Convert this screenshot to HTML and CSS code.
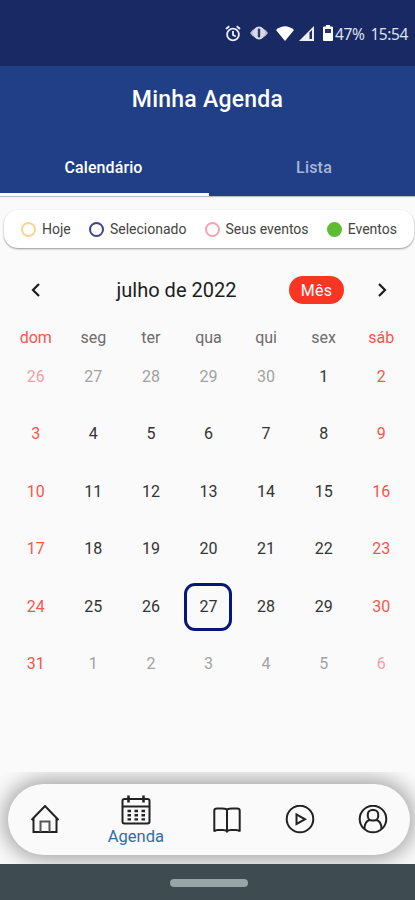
FILE: index.html
```html
<!DOCTYPE html>
<html lang="pt-BR">
<head>
  <meta charset="UTF-8">
  <meta name="viewport" content="width=device-width, initial-scale=1.0">
  <title>Minha Agenda</title>
  <link rel="stylesheet" href="styles.css">
</head>
<body>

  <div class="status-bar">
    <svg class="status-alarm" width="16" height="17" viewBox="0 0 16 17" fill="none" stroke="#eef1fa" stroke-width="1.8">
      <circle cx="8" cy="9.5" r="5.9"/>
      <path d="M8 6v4l2.700 1.600M1 4l3.300-2.700M15 4l-3.300-2.700"/>
    </svg>
    <svg class="status-vibrate" width="18" height="14" viewBox="0 0 18 14">
      <path d="M0 7L3 3.500h12L18 7l-3 3.500H3z" fill="#b9bfd3"/>
      <ellipse cx="9" cy="7" rx="6" ry="6.500" fill="#d8dbe7"/>
      <rect x="7.800" y="2.500" width="2.400" height="9" rx="1" fill="#2b3a70"/>
    </svg>
    <svg class="status-wifi" width="18" height="15" viewBox="0 0 18 15">
      <path d="M0 4Q9-3.500 18 4L9 15z" fill="#fff"/>
    </svg>
    <svg class="status-signal" width="15" height="15" viewBox="0 0 15 15">
      <path d="M0 15L15 0v15z" fill="#eceef6"/>
      <path d="M10.500 6.500l2.500-2.500v9h-2.500z" fill="#1f2d66"/>
    </svg>
    <svg class="status-battery" width="10" height="16" viewBox="0 0 10 16">
      <path d="M3 0h4v1.500h2q1 0 1 1V15q0 1-1 1H1q-1 0-1-1V2.500q0-1 1-1h2z" fill="#fff"/>
      <path d="M2 4h6v4H2z" fill="#27356c"/>
    </svg>
    <span class="battery-level">47%</span>
    <span class="clock">15:54</span>
  </div>

  <header class="header">
    <h1>Minha Agenda</h1>
    <div class="tabs">
      <a class="tab active">Calendário</a>
      <a class="tab">Lista</a>
    </div>
  </header>

  <main class="content">
    <div class="legend">
      <div class="legend-item"><span class="dot today"></span>Hoje</div>
      <div class="legend-item"><span class="dot selected"></span>Selecionado</div>
      <div class="legend-item"><span class="dot yours"></span>Seus eventos</div>
      <div class="legend-item"><span class="dot events"></span>Eventos</div>
    </div>

    <div class="month-bar">
      <svg class="arrow" width="10" height="14" viewBox="0 0 10 14"><path d="M8 1L2 7l6 6"/></svg>
      <span class="month-name">julho de 2022</span>
      <button class="month-button">Mês</button>
      <svg class="arrow" width="10" height="14" viewBox="0 0 10 14"><path d="M2 1l6 6-6 6"/></svg>
    </div>

    <div class="week-days">
      <span>dom</span><span>seg</span><span>ter</span><span>qua</span><span>qui</span><span>sex</span><span>sáb</span>
    </div>

    <div class="days">
      <span class="out">26</span><span class="out">27</span><span class="out">28</span><span class="out">29</span><span class="out">30</span><span>1</span><span>2</span>
      <span>3</span><span>4</span><span>5</span><span>6</span><span>7</span><span>8</span><span>9</span>
      <span>10</span><span>11</span><span>12</span><span>13</span><span>14</span><span>15</span><span>16</span>
      <span>17</span><span>18</span><span>19</span><span>20</span><span>21</span><span>22</span><span>23</span>
      <span>24</span><span>25</span><span>26</span><span class="current">27</span><span>28</span><span>29</span><span>30</span>
      <span>31</span><span class="out">1</span><span class="out">2</span><span class="out">3</span><span class="out">4</span><span class="out">5</span><span class="out">6</span>
    </div>
  </main>

  <div class="nav-area">
    <nav class="nav">
      <a class="nav-item">
        <svg width="30" height="30" viewBox="0 0 30 30">
          <path d="M1.500 15L15 1l13.500 14M3.500 13.500V27h23V13.500"/>
          <path class="door" d="M10.500 27V16.500h9V27"/>
        </svg>
      </a>
      <a class="nav-item active">
        <svg width="30" height="30" viewBox="0 0 30 30">
          <rect x="1.500" y="4" width="27" height="24.500" rx="2"/>
          <path d="M1.500 11.500h27"/>
          <path class="rings" d="M7.500 0.500v7M22.500 0.500v7"/>
          <path class="dates" d="M6.500 16h17.500M6.500 20.200h17.500M6.500 24.400h17.500"/>
        </svg>
        <span>Agenda</span>
      </a>
      <a class="nav-item">
        <svg width="28" height="26" viewBox="0 0 28 26">
          <path d="M14 2.500Q12 1.500 9 1.500H4Q1.300 1.500 1.300 3.500v21Q2 23 5 23h5q3 0 4 1.500Q15 23 18 23h5q3 0 3.700 1.500v-21q0-2-2.700-2H19Q16 1.500 14 2.500zM14 2.500v22"/>
        </svg>
      </a>
      <a class="nav-item">
        <svg width="30" height="30" viewBox="0 0 30 30">
          <circle cx="15" cy="14" r="13.300"/>
          <path d="M11.500 9.500v9.500l8.500-4.700z"/>
        </svg>
      </a>
      <a class="nav-item">
        <svg width="30" height="30" viewBox="0 0 30 30">
          <circle cx="15" cy="14" r="13.300"/>
          <rect x="9.800" y="5" width="10.400" height="10.500" rx="4.500"/>
          <path d="M6.500 24q0-8 5.500-9M23.500 24q0-8-5.500-9"/>
        </svg>
      </a>
    </nav>
  </div>

  <div class="system-bar"><div class="handle"></div></div>

</body>
</html>
```

FILE: styles.css
```css
* {
  box-sizing: border-box;
}

body {
  margin: 0;
  height: 900px;
  display: flex;
  flex-direction: column;
  font-family: Roboto, sans-serif;
  background-color: #fafafa;
  overflow: hidden;
}

.status-bar {
  height: 66px;
  flex: none;
  display: flex;
  align-items: center;
  justify-content: flex-end;
  padding: 0 7px 0 0;
  background-color: #192963;
  color: #dfe3ef;
  font-family: "Noto Sans", sans-serif;
  font-size: 15.5px;
  letter-spacing: -0.4px;
}

.status-alarm {
  margin-right: 9px;
}

.status-vibrate {
  margin-right: 8px;
}

.status-wifi {
  margin-right: 5px;
}

.status-signal {
  margin-right: 9px;
}

.status-battery {
  margin-right: 2px;
}

.battery-level,
.clock {
  padding-top: 2px;
}

.battery-level {
  margin-right: 6px;
}

.header {
  height: 130px;
  flex: none;
  display: flex;
  flex-direction: column;
  justify-content: space-between;
  background-color: #203f86;
  color: white;
  box-shadow: 0 1px 1px #b9bdc8;
}

h1 {
  margin: 20px 0 0;
  text-align: center;
  font-size: 23px;
  line-height: 28px;
  font-weight: 500;
  letter-spacing: 0.25px;
}

.tabs {
  display: grid;
  grid-template-columns: 209px 1fr;
}

.tab {
  height: 58px;
  padding: 20px 0 0 4px;
  text-align: center;
  font-size: 16px;
  line-height: 20px;
  font-weight: 500;
  letter-spacing: 0.2px;
  color: #a9b5d8;
  border-bottom: 3px solid transparent;
}

.tab.active {
  padding-left: 0;
  padding-right: 2px;
  letter-spacing: 0.1px;
  color: white;
  border-bottom-color: white;
}

.content {
  flex: 1;
}

.legend {
  height: 38px;
  margin: 14px 1px 0 4px;
  padding: 0 17px 0 17px;
  display: flex;
  align-items: center;
  justify-content: space-between;
  background-color: white;
  border-radius: 14px;
  box-shadow: 0 1px 2px rgba(0, 0, 0, 0.4);
  font-size: 14px;
  color: #444;
}

.legend-item {
  display: flex;
  align-items: center;
  gap: 6px;
}

.dot {
  width: 15px;
  height: 15px;
  border-radius: 50%;
  border: 2px solid;
}

.dot.today {
  border-color: #fcd293;
}

.dot.selected {
  border-color: #3c4690;
}

.dot.yours {
  border-color: #f5a3b0;
}

.dot.events {
  border-color: #5cbd2f;
  background-color: #5cbd2f;
}

.month-bar {
  height: 28px;
  margin-top: 28px;
  padding: 0 28px 0 31px;
  display: flex;
  align-items: center;
}

.arrow {
  fill: none;
  stroke: #1b1b1b;
  stroke-width: 2.2;
}

.month-name {
  flex: 1;
  padding-left: 23px;
  text-align: center;
  font-size: 20px;
  color: #1d1d1d;
}

.month-button {
  width: 55px;
  height: 28px;
  margin: 0 33px 0 0;
  padding: 0;
  border: none;
  border-radius: 14px;
  background-color: #fb3524;
  color: white;
  font-family: inherit;
  font-size: 16px;
  letter-spacing: 0.3px;
}

.week-days, .days {
  display: grid;
  grid-template-columns: repeat(7, 1fr);
  padding: 0 5px 0 7px;
  text-align: center;
}

.week-days {
  margin-top: 24px;
  font-size: 16px;
  line-height: 20px;
  color: #6c6c6c;
}

.days {
  margin-top: -0.5px;
  grid-auto-rows: 57.6px;
  font-size: 16px;
  line-height: 57.6px;
  color: #333;
}

.week-days span:nth-child(7n+1), .week-days span:nth-child(7n),
.days span:nth-child(7n+1), .days span:nth-child(7n) {
  color: #f6564b;
}

.days .out {
  color: #a2a2a2;
}

.days .out:nth-child(7n+1), .days .out:nth-child(7n) {
  color: #f5a0a5;
}

.days .current {
  width: 48px;
  height: 48px;
  place-self: center;
  border: 3px solid #061877;
  border-radius: 11px;
  line-height: 42px;
}

.nav-area {
  height: 92px;
  flex: none;
  padding: 12px 5px 0 8px;
  overflow: hidden;
}

.nav {
  height: 71px;
  display: flex;
  align-items: center;
  background-color: #fafafa;
  border-radius: 36px;
  box-shadow: 0 0 22px 3px rgba(0, 0, 0, 0.4);
}

.nav-item {
  flex: 1;
  display: flex;
  flex-direction: column;
  align-items: center;
}

.nav-item.active {
  flex: 1.5;
  padding-top: 3px;
  color: #2c6fae;
  font-size: 16.5px;
  line-height: 20px;
}

.nav-item.active span {
  padding-top: 2px;
}

.nav-item svg {
  fill: none;
  stroke: #222;
  stroke-width: 2;
}

.nav-item .door {
  stroke: #555;
}

.nav-item .rings {
  stroke-width: 2.6;
}

.nav-item .dates {
  stroke-width: 2.4;
  stroke-dasharray: 3.5;
}

.system-bar {
  height: 36px;
  flex: none;
  display: flex;
  justify-content: center;
  padding: 15px 0 0 2px;
  background-color: #3e4c52;
}

.handle {
  width: 78px;
  height: 8px;
  border-radius: 4px;
  background-color: #97a5a7;
}
```
